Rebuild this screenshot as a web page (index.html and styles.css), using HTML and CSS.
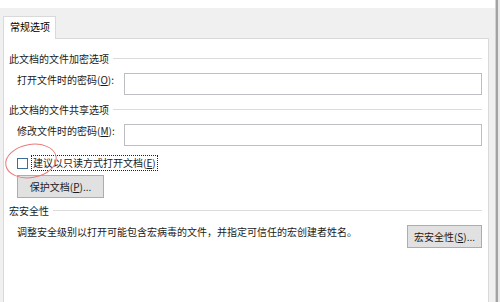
FILE: index.html
```html
<!DOCTYPE html>
<html lang="zh-CN">
<head>
<meta charset="utf-8">
<title>常规选项</title>
<link rel="stylesheet" href="styles.css">
</head>
<body>
<div class="window">
  <div class="main">
    <div class="topbar"></div>
    <div class="dialog">
      <div class="tabs"><div class="tab">常规选项</div></div>
      <div class="panel">
        <div class="group-title"><span>此文档的文件加密选项</span></div>
        <div class="field">
          <span class="label">打开文件时的密码(<u>O</u>):</span>
          <div class="input"></div>
        </div>
        <div class="group-title t2"><span>此文档的文件共享选项</span></div>
        <div class="field">
          <span class="label">修改文件时的密码(<u>M</u>):</span>
          <div class="input"></div>
        </div>
        <div class="check-row">
          <span class="checkbox"></span>
          <span class="focus">建议以只读方式打开文档(<u>E</u>)</span>
        </div>
        <div class="btn-row"><button class="btn protect">保护文档(<u>P</u>)...</button></div>
        <div class="group-title t3"><span>宏安全性</span></div>
        <div class="macro-row">
          <span class="macro-text">调整安全级别以打开可能包含宏病毒的文件，并指定可信任的宏创建者姓名。</span>
          <button class="btn macro">宏安全性(<u>S</u>)...</button>
        </div>
      </div>
    </div>
  </div>
  <div class="scroll"></div>
  <svg class="mark" width="70" height="46" viewBox="0 0 70 46">
    <ellipse cx="31" cy="21" rx="25.5" ry="16.5" transform="rotate(-10 31 21)" fill="none" stroke="#e97a7a" stroke-width="1"/>
  </svg>
</div>
</body>
</html>
```
FILE: styles.css
```css
html, body {
  margin: 0;
  padding: 0;
  overflow: hidden;
  background: #fff;
}
body {
  font-family: "Noto Sans CJK SC", "Microsoft YaHei", sans-serif;
  font-size: 10px;
  color: #1a1a1a;
}
.window {
  position: relative;
  display: flex;
  width: 500px;
  height: 302px;
}
.main {
  width: 495px;
  display: flex;
  flex-direction: column;
}
.topbar {
  height: 8px;
  background: #fff;
}
.dialog {
  flex: 1;
  background: #f0f0f0;
  padding: 8px 6px 0 3px;
  display: flex;
  flex-direction: column;
}
.tabs {
  display: flex;
  height: 22px;
}
.tab {
  position: relative;
  z-index: 1;
  width: 53px;
  height: 23px;
  box-sizing: border-box;
  border: 1px solid #d9d9d9;
  border-bottom: none;
  background: #fff;
  padding: 3px 0 0 6px;
  line-height: 14px;
  color: #000;
}
.panel {
  flex: 1;
  background: #fff;
  border: 1px solid #d9d9d9;
  border-bottom: none;
  padding: 0 6px 0 5px;
}
.group-title {
  display: flex;
  align-items: center;
  height: 14px;
  line-height: 14px;
  margin-top: 13px;
}
.group-title::after {
  content: "";
  flex: 1;
  height: 1px;
  background: #dcdcdc;
  margin-left: 4px;
  margin-top: -1px;
}
.group-title.t2 { margin-top: 8px; }
.group-title.t3 { margin-top: 6px; }
.field {
  display: flex;
  align-items: flex-start;
  margin-top: 7px;
  padding-left: 8px;
}
.label {
  width: 107px;
  line-height: 14px;
  white-space: nowrap;
}
.input {
  flex: 1;
  height: 22px;
  box-sizing: border-box;
  border: 1px solid #bdbdc2;
  background: #fff;
}
.check-row {
  display: flex;
  align-items: center;
  height: 16px;
  margin-top: 9px;
  padding-left: 8px;
}
.checkbox {
  width: 11px;
  height: 11px;
  box-sizing: border-box;
  border: 1px solid #3d6e9a;
  background: #fff;
}
.focus {
  margin-left: 3px;
  border: 1px dotted #222;
  padding: 0 1px;
  line-height: 14px;
  white-space: nowrap;
}
.btn-row {
  margin-top: 4px;
  padding-left: 8px;
}
.btn {
  display: block;
  height: 23px;
  box-sizing: border-box;
  border: 1px solid #adadad;
  background: #e1e1e1;
  font-family: inherit;
  font-size: 10px;
  color: #1a1a1a;
  padding: 0;
  line-height: 14px;
}
.btn.protect { width: 87px; }
.macro-row {
  display: flex;
  align-items: flex-start;
  margin-top: 7px;
  padding-left: 8px;
}
.macro-text {
  line-height: 14px;
  white-space: nowrap;
}
.btn.macro {
  width: 75px;
  margin-left: auto;
}
.scroll {
  width: 5px;
  background: linear-gradient(to right, #d2d2d2 0 1px, #a3a3a3 1px 3px, #e9e9e9 3px);
}
.mark {
  position: absolute;
  left: 0;
  top: 140px;
}
```
